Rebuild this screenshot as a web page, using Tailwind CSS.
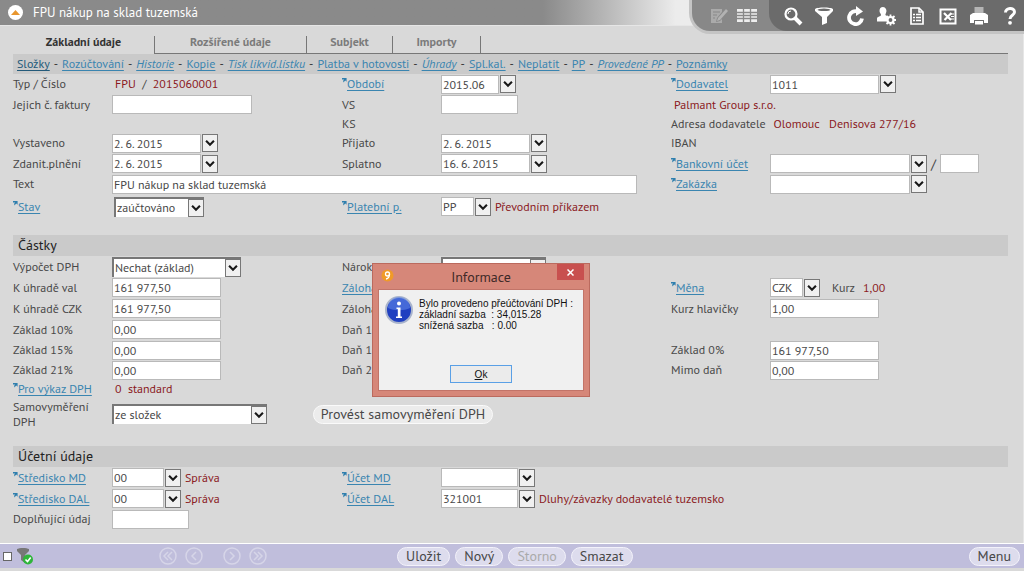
<!DOCTYPE html>
<html lang="cs">
<head>
<meta charset="utf-8">
<title>FPU nákup na sklad tuzemská</title>
<script src="https://cdn.jsdelivr.net/npm/@tailwindcss/browser@4"></script>
</head>
<body class="min-h-screen flex flex-col bg-[#d9d9d9] font-['PT_Sans','Noto_Sans',sans-serif] text-xs text-[#484848]">
<svg class="hidden">
  <symbol id="chev" viewBox="0 0 16 18"><path d="M3.500 6.500L8 11l4.500-4.500" fill="none" stroke="#1a1a1a" stroke-width="2.400"/></symbol>
  <symbol id="ref" viewBox="0 0 6 6"><path d="M0 0h5.500v4.500L4 3 1.500 5.500V3L2.500 1.800H0z" fill="#2f7fae"/></symbol>
</svg>

<header class="relative h-[26px] shrink-0 flex items-center pl-2 bg-linear-to-r from-[#8a8a8a] from-53% to-[#ececec] to-66% border-b border-[#e6e6e6]">
  <button aria-label="Nahoru" class="size-[15px] rounded-full bg-white flex items-center justify-center"><svg class="w-[9px] h-[5px]" viewBox="0 0 9 5"><path d="M0 5L4.500 0 9 5z" fill="#e8962e"/></svg></button>
  <h1 class="ml-[10px] text-[13px] text-white">FPU nákup na sklad tuzemská</h1>
  <nav aria-label="Nástroje" class="absolute right-0 top-0 h-[31px] w-[332px] rounded-bl-[18px] bg-[#888] shadow-[0_0_0_3px_#c4c4c4] flex">
    <div class="w-[77px] pl-[17px] flex items-center gap-2">
      <button aria-label="Upravit"><svg class="size-5" viewBox="0 0 20 20"><path d="M2 3h11v3l-5 6-1 4 4-1 2-2v4H2z" fill="#aaa"/><path d="M4 6h7M4 9h4M4 12h2" stroke="#888"/><path d="M17 3l2 2-8 9-3 1 1-3z" fill="#b2b2b2"/></svg></button>
      <button aria-label="Tabulka"><svg class="size-5" viewBox="0 0 20 20"><path d="M0 3h20v13H0z" fill="#eee"/><path d="M0 6.500h20M0 9.500h20M0 12.500h20M6.500 3v13M13.500 3v13" stroke="#888" stroke-width="1.300"/></svg></button>
    </div>
    <div class="flex-1 rounded-bl-[18px] bg-[#6b6b6b] pl-[14px] pr-1 flex items-center justify-between">
      <button aria-label="Hledat"><svg class="size-5" viewBox="0 0 20 20"><circle cx="8" cy="8" r="5.500" fill="none" stroke="#fff" stroke-width="2.200"/><path d="M12 12l6 6" stroke="#fff" stroke-width="4"/><path d="M5 8a3 3 0 013-3" stroke="#fff" fill="none"/></svg></button>
      <button aria-label="Filtr"><svg class="size-5" viewBox="0 0 20 20"><path d="M1 3c2-2 16-2 18 0v2l-6 6v6l-5 2v-8L1 5z" fill="#fff"/><ellipse cx="10" cy="3.800" rx="6.500" ry="1.200" fill="#6b6b6b"/></svg></button>
      <button aria-label="Obnovit"><svg class="size-5" viewBox="0 0 20 20"><path d="M13 5.600A6.500 6.500 0 1017 12.500" fill="none" stroke="#fff" stroke-width="3.800"/><path d="M11 0l7 5.500-7 4.500z" fill="#fff"/></svg></button>
      <button aria-label="Uživatel"><svg class="size-5" viewBox="0 0 20 20"><path d="M7 1a3.500 4 0 013 6c-.5 1-1 2 0 2.500l2 1v5H1v-3c0-2 4-2 4-3.500S3.500 7 3.500 5A3.500 4 0 017 1z" fill="#fff"/><circle cx="14.500" cy="14" r="3" fill="#6b6b6b" stroke="#fff" stroke-width="2.200"/><path d="M14.500 8.500v2.500M14.500 17v2.500M9 14h2.500M17.500 14H20M10.500 10l2 2M16.500 16l2 2M18.500 10l-2 2M12.500 16l-2 2" stroke="#fff" stroke-width="1.800"/></svg></button>
      <button aria-label="Dokument"><svg class="size-5" viewBox="0 0 20 20"><path d="M4 2h8l4 4v12H4z" fill="none" stroke="#fff" stroke-width="1.700"/><path d="M12 2v4h4M6 8.500h2M9 8.500h5M6 11.500h2M9 11.500h5M6 14.500h2M9 14.500h5" stroke="#fff" stroke-width="1.500" fill="none"/></svg></button>
      <button aria-label="Excel"><svg class="size-5" viewBox="0 0 20 20"><rect x="2.500" y="3.500" width="15" height="14" fill="none" stroke="#fff" stroke-width="2"/><path d="M6 7l7 7M13.500 7l-7 7" stroke="#fff" stroke-width="2.200"/><path d="M13 8h3M13 10.500h3M13 13h3" stroke="#fff"/></svg></button>
      <button aria-label="Tisk"><svg class="size-5" viewBox="0 0 20 20"><path d="M5.500 1h9v7h-9z" fill="#b5b5b5"/><path d="M1 9l3-2h12l3 2v8h-4v-3H5v3H1z" fill="#fff"/><path d="M5.500 14.500h9V19h-9z" fill="#fff" stroke="#6b6b6b"/></svg></button>
      <button aria-label="Nápověda"><svg class="size-5" viewBox="0 0 20 20"><path d="M5.500 6.500c0-5 9-5.500 9-.5 0 3.500-4.500 3-4.500 7" fill="none" stroke="#fff" stroke-width="3"/><circle cx="10" cy="16.800" r="1.900" fill="#fff"/></svg></button>
    </div>
  </nav>
</header>

<main class="flex-1 pl-[13px] pr-[15px] border-r border-[#e6e6e6] whitespace-nowrap
  [&_section]:grid [&_section]:grid-cols-[329fr_329fr_337fr]
  [&_section>div]:flex [&_section>div]:items-center [&_section>div]:min-w-0
  [&_label]:w-[99px] [&_label]:shrink-0
  [&_input]:h-[19px] [&_input]:bg-white [&_input]:border [&_input]:border-[#b9b9b9] [&_input]:px-px [&_input]:min-w-0
  [&_section_button]:ml-px [&_section_button]:w-4 [&_section_button]:h-[18px] [&_section_button]:shrink-0 [&_section_button]:border [&_section_button]:border-[#777] [&_section_button]:bg-[#f0f0f0]
  [&_label_a]:text-[#3a85b0] [&_label_a]:underline [&_label_a]:underline-offset-2 [&_label_svg]:inline-block [&_label_svg]:size-[5px] [&_label_svg]:align-super
  [&_output]:text-[#8b1a1e]
  [&_h2]:h-[21px] [&_h2]:bg-[#cacaca] [&_h2]:pl-[5px] [&_h2]:text-sm [&_h2]:text-[#222]">
  <nav aria-label="Záložky" class="h-7 pt-[10px] flex text-xs font-bold text-[#7b7b7b] leading-[12px] text-center">
    <a href="#" class="w-[141px] text-[#333]">Základní údaje</a>
    <div class="flex-1 flex border-l border-b border-[#777]">
      <a href="#" class="w-[152px] border-r border-[#777]">Rozšířené údaje</a>
      <a href="#" class="w-[86px] border-r border-[#777]">Subjekt</a>
      <a href="#" class="w-[88px] border-r border-[#777]">Importy</a>
    </div>
  </nav>
  <nav aria-label="Odkazy" class="h-5 bg-[#cacaca] pl-1 flex items-center gap-1 [&_a]:underline [&_a]:underline-offset-2 [&_i]:not-italic [&_i]:text-[#333] text-[#3a85b0]">
    <a href="#" class="text-[#235a7a]">Složky</a><i>-</i><a href="#">Rozúčtování</a><i>-</i><a href="#" class="italic">Historie</a><i>-</i><a href="#">Kopie</a><i>-</i><a href="#" class="italic">Tisk likvid.lístku</a><i>-</i><a href="#">Platba v hotovosti</a><i>-</i><a href="#" class="italic">Úhrady</a><i>-</i><a href="#">Spl.kal.</a><i>-</i><a href="#">Neplatit</a><i>-</i><a href="#">PP</a><i>-</i><a href="#" class="italic">Provedené PP</a><i>-</i><a href="#">Poznámky</a>
  </nav>

  <section aria-label="Základní údaje" class="grid-rows-[20px_21px_18px_20px_21px_20px_25px] mb-4">
    <div><label for="cislo">Typ / Číslo</label><output id="cislo" class="pl-[3px]">FPU&nbsp; <span class="text-[#484848]">/</span>&nbsp; 2015060001</output></div>
    <div><label for="obdobi"><svg><use href="#ref"/></svg><a href="#">Období</a></label><input id="obdobi" value="2015.06" class="w-[58px]"><button aria-label="Vybrat období"><svg class="w-full h-full" viewBox="0 0 16 18"><use href="#chev"/></svg></button></div>
    <div><label for="dodavatel"><svg><use href="#ref"/></svg><a href="#">Dodavatel</a></label><input id="dodavatel" value="1011" class="w-[109px]"><button aria-label="Vybrat dodavatele"><svg class="w-full h-full" viewBox="0 0 16 18"><use href="#chev"/></svg></button></div>

    <div><label for="jejich">Jejich č. faktury</label><input id="jejich" class="w-[140px]"></div>
    <div><label for="vs">VS</label><input id="vs" class="w-[77px]"></div>
    <div><output class="pl-[3px]">Palmant Group s.r.o.</output></div>

    <div></div>
    <div>KS</div>
    <div>Adresa dodavatele<output class="pl-2">Olomouc &nbsp; Denisova 277/16</output></div>

    <div><label for="vyst">Vystaveno</label><input id="vyst" value="2. 6. 2015" class="w-[89px]"><button aria-label="Kalendář"><svg class="w-full h-full" viewBox="0 0 16 18"><use href="#chev"/></svg></button></div>
    <div><label for="prij">Přijato</label><input id="prij" value="2. 6. 2015" class="w-[89px]"><button aria-label="Kalendář"><svg class="w-full h-full" viewBox="0 0 16 18"><use href="#chev"/></svg></button></div>
    <div>IBAN</div>

    <div><label for="zdan">Zdanit.plnění</label><input id="zdan" value="2. 6. 2015" class="w-[89px]"><button aria-label="Kalendář"><svg class="w-full h-full" viewBox="0 0 16 18"><use href="#chev"/></svg></button></div>
    <div><label for="spl">Splatno</label><input id="spl" value="16. 6. 2015" class="w-[89px]"><button aria-label="Kalendář"><svg class="w-full h-full" viewBox="0 0 16 18"><use href="#chev"/></svg></button></div>
    <div><label for="ucet"><svg><use href="#ref"/></svg><a href="#">Bankovní účet</a></label><input id="ucet" class="w-[140px]"><button aria-label="Vybrat účet"><svg class="w-full h-full" viewBox="0 0 16 18"><use href="#chev"/></svg></button><span class="px-1 text-sm">/</span><input aria-label="Kód banky" class="w-[39px]"></div>

    <div class="col-span-2"><label for="text">Text</label><input id="text" value="FPU nákup na sklad tuzemská" class="w-[525px]"></div>
    <div><label for="zak"><svg><use href="#ref"/></svg><a href="#">Zakázka</a></label><input id="zak" class="w-[140px]"><button aria-label="Vybrat zakázku"><svg class="w-full h-full" viewBox="0 0 16 18"><use href="#chev"/></svg></button></div>

    <div><label for="stav"><svg><use href="#ref"/></svg><a href="#">Stav</a></label><span class="relative ml-[2px] flex w-[90px] h-[20px] border-t-2 border-l-2 border-[#777] bg-white"><select id="stav" class="w-full appearance-none px-px"><option>zaúčtováno</option></select><svg class="absolute right-0 top-0 w-4 h-[18px] border border-[#777] bg-[#f0f0f0] pointer-events-none" viewBox="0 0 16 18"><use href="#chev"/></svg></span></div>
    <div><label for="plat"><svg><use href="#ref"/></svg><a href="#">Platební p.</a></label><input id="plat" value="PP" class="w-[33px]"><button aria-label="Vybrat platební podmínku"><svg class="w-full h-full" viewBox="0 0 16 18"><use href="#chev"/></svg></button><output class="pl-1">Převodním příkazem</output></div>
    <div></div>
  </section>

  <h2>Částky</h2>
  <section aria-label="Částky" class="grid-rows-[21px_21px_21px_21px_20px_20px_18px_32px] mb-4">
    <div><label for="vypocet">Výpočet DPH</label><span class="relative flex w-[129px] h-[20px] border-t-2 border-l-2 border-[#777] bg-white"><select id="vypocet" class="w-full appearance-none px-px"><option>Nechat (základ)</option></select><svg class="absolute right-0 top-0 w-4 h-[18px] border border-[#777] bg-[#f0f0f0] pointer-events-none" viewBox="0 0 16 18"><use href="#chev"/></svg></span></div>
    <div><label for="narok">Nárok</label><span class="relative flex w-[105px] h-[20px] border-t-2 border-l-2 border-[#777] bg-white"><select id="narok" class="w-full appearance-none px-px"></select><svg class="absolute right-0 top-0 w-4 h-[18px] border border-[#777] bg-[#f0f0f0] pointer-events-none" viewBox="0 0 16 18"><use href="#chev"/></svg></span></div>
    <div></div>

    <div><label for="uval">K úhradě val</label><input id="uval" value="161 977,50" class="w-[109px]"></div>
    <div><label for="z1"><a href="#">Záloha</a></label><input id="z1" class="w-[109px]"></div>
    <div><label for="mena"><svg><use href="#ref"/></svg><a href="#">Měna</a></label><input id="mena" value="CZK" class="w-[33px]"><button aria-label="Vybrat měnu"><svg class="w-full h-full" viewBox="0 0 16 18"><use href="#chev"/></svg></button><span class="pl-3">Kurz</span><output class="pl-2">1,00</output></div>

    <div><label for="uczk">K úhradě CZK</label><input id="uczk" value="161 977,50" class="w-[109px]"></div>
    <div><label for="z2">Záloha</label><input id="z2" class="w-[109px]"></div>
    <div><label for="kh">Kurz hlavičky</label><input id="kh" value="1,00" class="w-[109px]"></div>

    <div><label for="b10">Základ 10%</label><input id="b10" value="0,00" class="w-[109px]"></div>
    <div><label for="d10">Daň 10%</label><input id="d10" class="w-[109px]"></div>
    <div></div>

    <div><label for="b15">Základ 15%</label><input id="b15" value="0,00" class="w-[109px]"></div>
    <div><label for="d15">Daň 15%</label><input id="d15" class="w-[109px]"></div>
    <div><label for="b0">Základ 0%</label><input id="b0" value="161 977,50" class="w-[109px]"></div>

    <div><label for="b21">Základ 21%</label><input id="b21" value="0,00" class="w-[109px]"></div>
    <div><label for="d21">Daň 21%</label><input id="d21" class="w-[109px]"></div>
    <div><label for="md">Mimo daň</label><input id="md" value="0,00" class="w-[109px]"></div>

    <div class="col-span-3"><label for="vykaz"><svg><use href="#ref"/></svg><a href="#">Pro výkaz DPH</a></label><output id="vykaz" class="pl-[3px]">0&nbsp; standard</output></div>

    <div class="col-span-3"><label for="samo" class="leading-[15px]">Samovyměření<br>DPH</label><span class="relative flex w-[155px] h-[20px] border-t-2 border-l-2 border-[#777] bg-white"><select id="samo" class="w-full appearance-none px-px"><option>ze složek</option></select><svg class="absolute right-0 top-0 w-4 h-[18px] border border-[#777] bg-[#f0f0f0] pointer-events-none" viewBox="0 0 16 18"><use href="#chev"/></svg></span>
      <input type="button" value="Provést samovyměření DPH" class="ml-[46px] w-[180px] rounded-full !border-[#fafafa] !bg-[#ececec] text-sm leading-4"></div>
  </section>

  <h2>Účetní údaje</h2>
  <section aria-label="Účetní údaje" class="grid-rows-[21px_21px_20px]">
    <div><label for="smd"><svg><use href="#ref"/></svg><a href="#">Středisko MD</a></label><input id="smd" value="00" class="w-[52px]"><button aria-label="Vybrat středisko"><svg class="w-full h-full" viewBox="0 0 16 18"><use href="#chev"/></svg></button><output class="pl-1">Správa</output></div>
    <div><label for="umd"><svg><use href="#ref"/></svg><a href="#">Účet MD</a></label><input id="umd" class="w-[77px]"><button aria-label="Vybrat účet MD"><svg class="w-full h-full" viewBox="0 0 16 18"><use href="#chev"/></svg></button></div>
    <div></div>
    <div><label for="sdal"><svg><use href="#ref"/></svg><a href="#">Středisko DAL</a></label><input id="sdal" value="00" class="w-[52px]"><button aria-label="Vybrat středisko"><svg class="w-full h-full" viewBox="0 0 16 18"><use href="#chev"/></svg></button><output class="pl-1">Správa</output></div>
    <div class="col-span-2"><label for="udal"><svg><use href="#ref"/></svg><a href="#">Účet DAL</a></label><input id="udal" value="321001" class="w-[77px]"><button aria-label="Vybrat účet DAL"><svg class="w-full h-full" viewBox="0 0 16 18"><use href="#chev"/></svg></button><output class="pl-1">Dluhy/závazky dodavatelé tuzemsko</output></div>
    <div><label for="dopl">Doplňující údaj</label><input id="dopl" class="w-[77px]"></div>
  </section>
</main>

<footer class="shrink-0 h-[25px] mb-[3px] border-t border-white bg-[#c0bedc] flex items-center pl-[3px] pr-1 text-sm leading-4
  [&_button]:rounded-full">
  <input type="checkbox" aria-label="Filtr zapnut" class="appearance-none size-[9px] border border-[#666] bg-white">
  <button aria-label="Filtr" class="ml-1"><svg class="size-[18px]" viewBox="0 0 18 18"><path d="M1 2c2-1.500 10-1.500 12 0v2L9 8v8l-4-3V8L1 4z" fill="#777"/><circle cx="12" cy="12.500" r="5" fill="#2fb53a"/><path d="M9.500 12.500l2 2 3.200-4" stroke="#fff" stroke-width="1.600" fill="none"/></svg></button>
  <nav aria-label="Stránkování" class="ml-[125px] flex gap-2 [&_svg]:size-[18px]">
    <button aria-label="První"><svg viewBox="0 0 18 18" fill="none" stroke="#d6d5e8" stroke-width="1.500"><circle cx="9" cy="9" r="8"/><path d="M9 5L5 9l4 4M13 5L9 9l4 4"/></svg></button>
    <button aria-label="Předchozí"><svg viewBox="0 0 18 18" fill="none" stroke="#d6d5e8" stroke-width="1.500"><circle cx="9" cy="9" r="8"/><path d="M11 5L7 9l4 4"/></svg></button>
    <button aria-label="Další" class="ml-3"><svg viewBox="0 0 18 18" fill="none" stroke="#d6d5e8" stroke-width="1.500"><circle cx="9" cy="9" r="8"/><path d="M7 5l4 4-4 4"/></svg></button>
    <button aria-label="Poslední"><svg viewBox="0 0 18 18" fill="none" stroke="#d6d5e8" stroke-width="1.500"><circle cx="9" cy="9" r="8"/><path d="M5 5l4 4-4 4M9 5l4 4-4 4"/></svg></button>
  </nav>
  <div class="ml-[130px] flex gap-[5px]">
    <button class="h-[19px] px-2 border border-[#f3f2fa] bg-[#dddced]">Uložit</button>
    <button class="h-[19px] px-2 border border-[#f3f2fa] bg-[#dddced]">Nový</button>
    <button disabled class="h-[19px] px-2 border border-[#f3f2fa] bg-[#dddced] text-[#aaa]">Storno</button>
    <button class="h-[19px] px-2 border border-[#f3f2fa] bg-[#dddced]">Smazat</button>
  </div>
  <button class="ml-auto h-[19px] px-2 border border-[#f3f2fa] bg-[#dddced]">Menu</button>
</footer>

<div role="dialog" aria-labelledby="dt" class="absolute left-[372px] top-[263px] w-[218px] h-[134px] bg-[#d68779] border border-[#bb6a5e] px-[5px] pb-[5px] flex flex-col">
  <div class="relative h-[25px] shrink-0 flex items-center justify-center">
    <svg class="absolute left-[3px] top-[5px] size-[13px]" viewBox="0 0 13 13"><circle cx="6.500" cy="6.500" r="6" fill="#f09a28"/><circle cx="6.500" cy="5" r="2" fill="none" stroke="#fff" stroke-width="1.300"/><path d="M8.500 5c0 3-1 4.500-3.500 5" fill="none" stroke="#fff" stroke-width="1.300"/></svg>
    <h2 id="dt" class="text-sm text-[#3f2a28]">Informace</h2>
    <button aria-label="Zavřít" class="absolute right-0 top-0 w-[27px] h-4 bg-[#c8504f] flex items-center justify-center"><svg class="size-[7px]" viewBox="0 0 7 7"><path d="M.5.5l6 6M6.500.5l-6 6" stroke="#fff" stroke-width="1.500"/></svg></button>
  </div>
  <div class="flex-1 border border-[#c27468] bg-[#f0f0f0] px-[6px] pt-[6px] pb-[7px] flex flex-col justify-between items-center font-['Liberation_Sans',sans-serif] text-[10px] leading-[11px] text-[#111]">
    <div class="w-full flex gap-[6px]">
      <svg class="size-7 shrink-0" viewBox="0 0 28 28"><circle cx="14" cy="14" r="13" fill="#1f3fc0" stroke="#a9b4cc" stroke-width="2"/><path d="M3 12a11 11 0 0122 0c-6 3-16 3-22 0z" fill="#5f86e8" opacity=".6"/><circle cx="14" cy="7.500" r="2" fill="#fff"/><path d="M11.500 11.500h4v9h1.500v1.500h-6v-1.500h1.800V13h-1.300z" fill="#fff"/></svg>
      <p class="pt-[2px] whitespace-pre">Bylo provedeno přeúčtování DPH :
základní sazba  : 34,015.28
snížená sazba   : 0.00</p>
    </div>
    <button class="w-[62px] h-[18px] border border-[#5aa0e6] bg-[#ebebeb]"><u>O</u>k</button>
  </div>
</div>
</body>
</html>
